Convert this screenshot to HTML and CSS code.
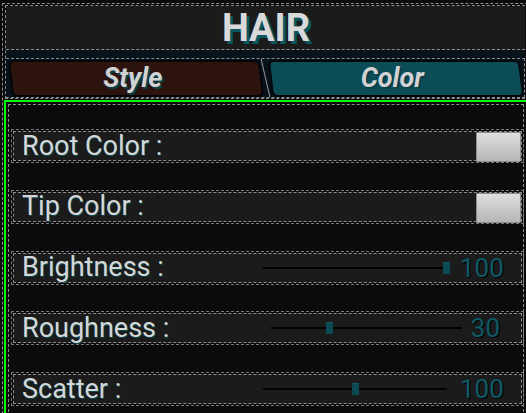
FILE: index.html
```html
<!DOCTYPE html>
<html lang="en">
<head>
<meta charset="utf-8">
<title>Hair</title>
<link rel="stylesheet" href="styles.css">
</head>
<body>
<div class="screen">
  <div class="top">
    <div class="header"><h1 class="title">HAIR</h1></div>
    <div class="strip"></div>
    <div class="tabs">
      <div class="tab tab--style"><span class="tab-text">Style</span></div>
      <div class="tab-sep"></div>
      <div class="tab tab--color"><span class="tab-text">Color</span></div>
    </div>
  </div>
  <div class="panel">
    <div class="panel-in">
      <div class="row">
        <span class="label">Root Color :</span>
        <span class="swatch"></span>
      </div>
      <div class="row">
        <span class="label">Tip Color :</span>
        <span class="swatch"></span>
      </div>
      <div class="row">
        <span class="label">Brightness :</span>
        <div class="slider slider--brightness"><span class="thumb" style="--pos:1"></span></div>
        <span class="value">100</span>
      </div>
      <div class="row">
        <span class="label">Roughness :</span>
        <div class="slider slider--roughness"><span class="thumb" style="--pos:0.3"></span></div>
        <span class="value">30</span>
      </div>
      <div class="row">
        <span class="label">Scatter :</span>
        <div class="slider slider--scatter"><span class="thumb" style="--pos:0.5"></span></div>
        <span class="value">100</span>
      </div>
    </div>
  </div>
</div>
</body>
</html>
```

FILE: styles.css
```css
html, body {
  margin: 0;
  padding: 0;
}
body {
  background: #0b0b0d;
  width: 526px;
  height: 413px;
  overflow: hidden;
  font-family: Roboto, "Liberation Sans", sans-serif;
}
.screen {
  margin: 3px 0 0 2px;
  width: 580px;
  height: 440px;
  border-left: 1px dashed #8d8d8d;
  border-top: 1px dashed #8d8d8d;
}
.top {
  margin: 1px 0 0 2px;
  width: 519px;
  border: 1px dashed #8d8d8d;
  border-right: none;
  background: #07111a;
}
.header {
  height: 43px;
  background: #1b1b1b;
  border-bottom: 1px dashed #8d8d8d;
  display: flex;
  align-items: center;
  justify-content: center;
}
.title {
  margin: 0 0 0 1px;
  font-size: 38px;
  font-weight: 700;
  line-height: 1;
  color: #d9d9d9;
  text-shadow: 3px 3px 0 #0c5660;
}
.strip {
  height: 8px;
  background: #09141a;
}
.tabs {
  height: 38px;
  border-top: 1px dashed #8d8d8d;
  border-bottom: 1px dashed #8d8d8d;
  border-right: 1px dashed #8d8d8d;
  background: #06111a;
  display: flex;
  align-items: stretch;
  padding: 0 2px 0 3px;
}
.tab {
  position: relative;
  flex: 1;
  display: flex;
  align-items: center;
  justify-content: center;
}
.tab::before {
  content: "";
  position: absolute;
  top: 1px;
  bottom: 0;
  left: 1px;
  right: 1px;
  border: 2px solid #020608;
  border-radius: 6px;
  transform: skewX(7deg);
}
.tab--style::before {
  background: #2d130e;
}
.tab--color::before {
  background: #0c4c57;
}
.tab--style {
  margin-right: 2px;
}
.tab--color {
  margin-left: 3px;
}
.tab-text {
  position: relative;
  font-size: 27px;
  font-weight: 700;
  font-style: italic;
  color: #d2d2d2;
  text-shadow: 2px 2px 0 #0a3f48;
  line-height: 1;
}
.tab--style .tab-text {
  margin-left: -6px;
}
.tab--color .tab-text {
  margin-left: -6px;
}
.tab-sep {
  width: 1px;
  background: #9a9a9a;
  transform: skewX(13deg);
}
.panel {
  margin: 1px 0 0 1px;
  border-left: 2px solid #00ff00;
  border-top: 2px solid #00ff00;
  width: 560px;
  height: 330px;
}
.panel-in {
  margin: 2px 0 0 2px;
  width: 514px;
  height: 320px;
  border: 1px dashed #8d8d8d;
  padding-top: 26px;
  display: flex;
  flex-direction: column;
  gap: 30.75px;
}
.row {
  margin-left: 4px;
  width: 507px;
  height: 28px;
  flex: none;
  border: 1px dashed #8d8d8d;
  outline: 1px dashed #7a7a7a;
  outline-offset: 1px;
  background: #1b1b1b;
  display: flex;
  align-items: center;
}
.label {
  flex: 1;
  padding-left: 8px;
  font-size: 27px;
  line-height: 1;
  color: #d6d6d6;
  text-shadow: 1px 1px 0 #0a4a54;
  white-space: nowrap;
}
.swatch {
  align-self: flex-start;
  flex: none;
  width: 43px;
  height: 28px;
  border: 1px solid #8e8e8e;
  border-radius: 1px;
  background: linear-gradient(#dedede, #b6b6b6);
}
.slider {
  position: relative;
  flex: none;
  height: 12px;
  display: flex;
  align-items: center;
}
.slider::before {
  content: "";
  display: block;
  width: 100%;
  height: 2px;
  background: #020202;
}
.slider--brightness {
  width: 187px;
  margin-right: 10px;
}
.slider--roughness {
  width: 191px;
  margin-right: -2px;
}
.slider--scatter {
  width: 184px;
  margin-right: 13px;
}
.thumb {
  position: absolute;
  top: 0;
  left: calc(var(--pos) * (100% - 7px));
  width: 7px;
  height: 12px;
  background: #0b4a55;
  box-shadow: inset 0 1px 0 #0f5a66;
}
.value {
  flex: none;
  width: 40px;
  margin-right: 21px;
  text-align: right;
  font-size: 26px;
  line-height: 1;
  color: #0d5a66;
  text-shadow: 1px 1px 0 #000;
}
```
